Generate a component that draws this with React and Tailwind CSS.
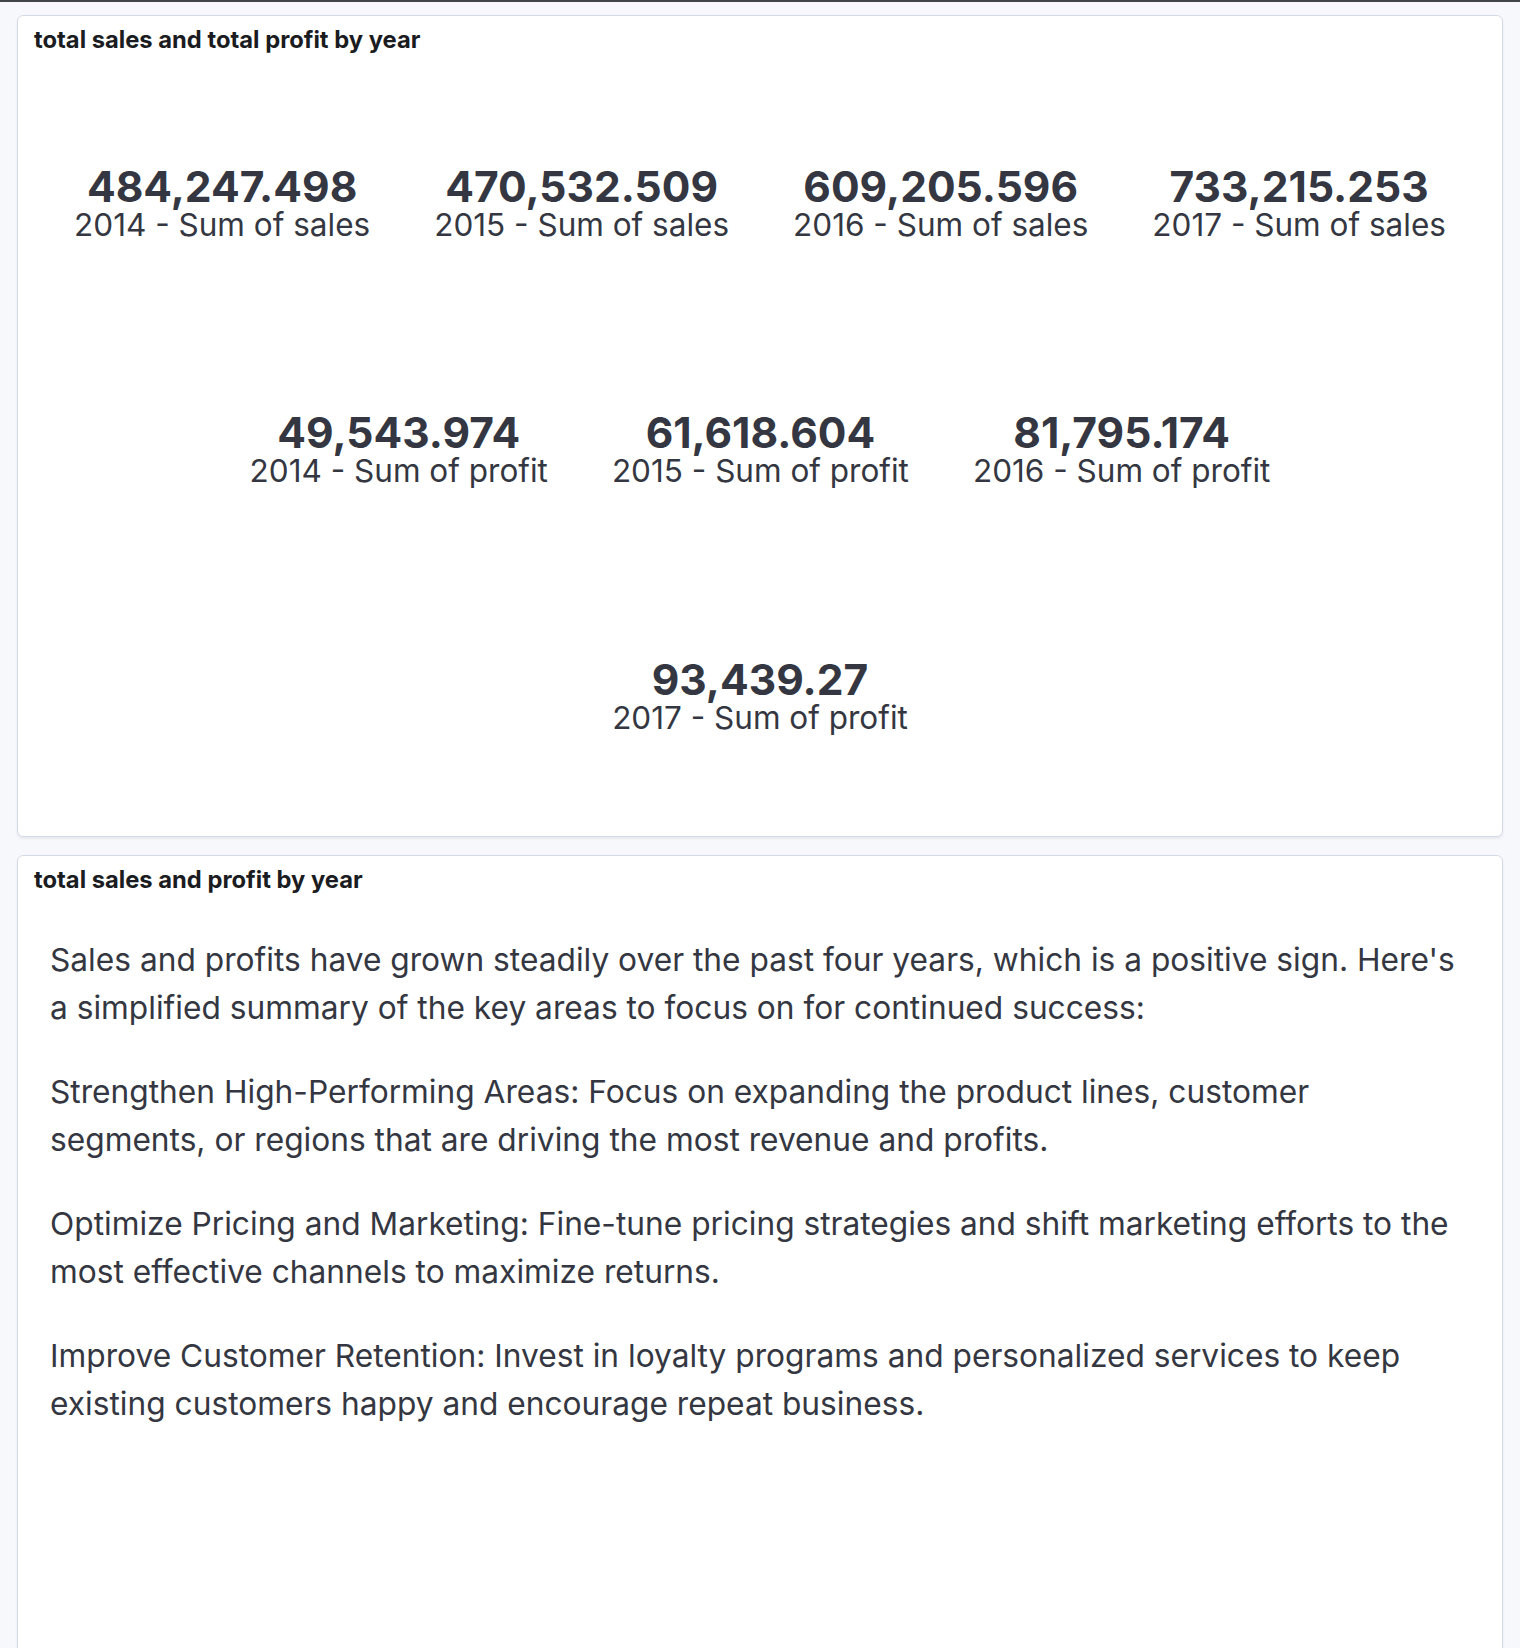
import React from 'react';

const sales = [
  { value: '484,247.498', label: '2014 - Sum of sales' },
  { value: '470,532.509', label: '2015 - Sum of sales' },
  { value: '609,205.596', label: '2016 - Sum of sales' },
  { value: '733,215.253', label: '2017 - Sum of sales' },
];

const profit = [
  { value: '49,543.974', label: '2014 - Sum of profit' },
  { value: '61,618.604', label: '2015 - Sum of profit' },
  { value: '81,795.174', label: '2016 - Sum of profit' },
];

const lastProfit = [{ value: '93,439.27', label: '2017 - Sum of profit' }];

const paragraphs = [
  "Sales and profits have grown steadily over the past four years, which is a positive sign. Here's a simplified summary of the key areas to focus on for continued success:",
  'Strengthen High-Performing Areas: Focus on expanding the product lines, customer segments, or regions that are driving the most revenue and profits.',
  'Optimize Pricing and Marketing: Fine-tune pricing strategies and shift marketing efforts to the most effective channels to maximize returns.',
  'Improve Customer Retention: Invest in loyalty programs and personalized services to keep existing customers happy and encourage repeat business.',
];

function Metric({ value, label }) {
  return (
    <div className="flex flex-col items-center px-8 text-[#343741]">
      <div className="text-[42.5px] leading-[40px] font-bold">{value}</div>
      <div className="text-[31.5px] leading-[36px]">{label}</div>
    </div>
  );
}

function MetricRow({ items }) {
  return (
    <div className="flex-1 flex items-center justify-center">
      {items.map((m) => (
        <Metric key={m.label} value={m.value} label={m.label} />
      ))}
    </div>
  );
}

function PanelTitle({ children }) {
  return (
    <div className="px-4 pt-[12px] text-[23.75px] leading-[24px] font-bold text-[#1a1c21]">{children}</div>
  );
}

export default function App() {
  return (
    <div className="h-[1648px] overflow-hidden bg-[#f7f8fc]" style={{ fontFamily: 'Inter, "Noto Sans", sans-serif' }}>
      <div className="h-[2px] bg-[#404548]" />
      <div className="px-[17px] pt-[13px]">
        {/* metrics panel */}
        <div className="h-[822px] flex flex-col bg-white border border-[#d3dae6] rounded-md shadow-[0_2px_2px_rgba(152,162,179,0.15)]">
          <PanelTitle>total sales and total profit by year</PanelTitle>
          <div className="flex-1 flex flex-col pt-[30px] pb-[15px]">
            <MetricRow items={sales} />
            <MetricRow items={profit} />
            <MetricRow items={lastProfit} />
          </div>
        </div>

        {/* markdown panel */}
        <div className="mt-[18px] h-[820px] bg-white border border-[#d3dae6] rounded-md shadow-[0_2px_2px_rgba(152,162,179,0.15)]">
          <PanelTitle>total sales and profit by year</PanelTitle>
          <div className="pl-8 pr-[35px] pt-[44px] text-[31.7px] leading-[48px] text-[#343741]">
            {paragraphs.map((p) => (
              <p key={p} className="mb-9">{p}</p>
            ))}
          </div>
        </div>
      </div>
    </div>
  );
}
